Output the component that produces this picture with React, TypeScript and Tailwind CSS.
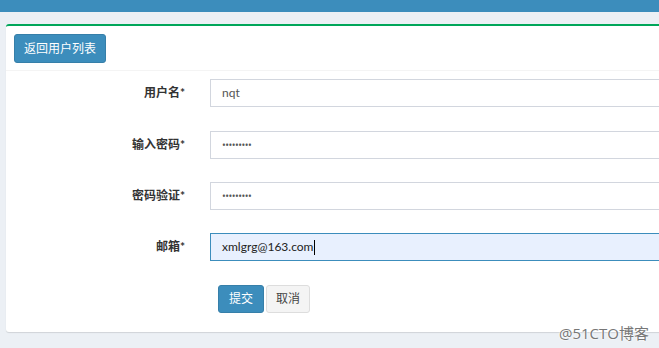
import React from "react";

const fontStack = 'Lato, "Noto Sans CJK SC", sans-serif';

function Row({ label, children, className = "" }: { label: string; children: React.ReactNode; className?: string }) {
  return (
    <div className={`flex items-center ${className}`}>
      <div className="w-[179px] shrink-0 text-right text-[12px] font-bold text-[#333]">{label}</div>
      <div className="ml-[25px] w-[480px] shrink-0">{children}</div>
    </div>
  );
}

function Field({ children, focused = false }: { children: React.ReactNode; focused?: boolean }) {
  return (
    <div
      className={`flex h-[28px] items-center border px-[11px] text-[12px] ${
        focused ? "border-[#3c8dbc] bg-[#e8f0fe] text-[#222]" : "border-[#d2d6de] bg-white text-[#555]"
      }`}
    >
      {children}
    </div>
  );
}

const Dots = () => <span className="font-['Open_Sans'] text-[10px] tracking-[-0.5px]">•••••••••</span>;

export default function App() {
  return (
    <div className="relative h-[348px] w-[659px] overflow-hidden bg-[#ecf0f5]" style={{ fontFamily: fontStack }}>
      <div className="h-[12px] bg-[#3c8dbc]" />
      <div className="pl-[6px] pt-[12px]">
        <div className="h-[308px] w-[680px] rounded-[3px] border-t-2 border-[#00a65a] bg-white shadow-[0_1px_1px_rgba(0,0,0,0.12)]">
          {/* header */}
          <div className="border-b border-[#f4f4f4] px-[8px] pt-[8px] pb-[7px]">
            <button className="h-[29px] rounded-[3px] border border-[#367fa9] bg-[#3c8dbc] px-[9px] text-[12px] text-white">
              返回用户列表
            </button>
          </div>

          {/* form */}
          <div className="pt-[8px]">
            <Row label="用户名*">
              <Field>nqt</Field>
            </Row>
            <Row label="输入密码*" className="mt-[24px]">
              <Field>
                <Dots />
              </Field>
            </Row>
            <Row label="密码验证*" className="mt-[23px]">
              <Field>
                <Dots />
              </Field>
            </Row>
            <Row label="邮箱*" className="mt-[23px]">
              <Field focused>
                <span>xmlgrg@163.com</span>
                <span className="ml-[1px] h-[15px] w-[1px] bg-black" />
              </Field>
            </Row>
            <div className="mt-[24px] flex pl-[212px]">
              <button className="h-[28px] rounded-[3px] border border-[#367fa9] bg-[#3c8dbc] px-[10px] text-[12px] text-white">
                提交
              </button>
              <button className="ml-[2px] h-[28px] rounded-[3px] border border-[#ddd] bg-[#f4f4f4] px-[9px] text-[12px] text-[#444]">
                取消
              </button>
            </div>
          </div>
        </div>
      </div>
      <div
        className="absolute bottom-[4px] right-[10px] text-[15px] text-[#777]"
        style={{ textShadow: "0 0 2px #fff, 0 0 2px #fff", fontFamily: '"Open Sans", "Noto Sans CJK SC", sans-serif' }}
      >
        @51CTO博客
      </div>
    </div>
  );
}
